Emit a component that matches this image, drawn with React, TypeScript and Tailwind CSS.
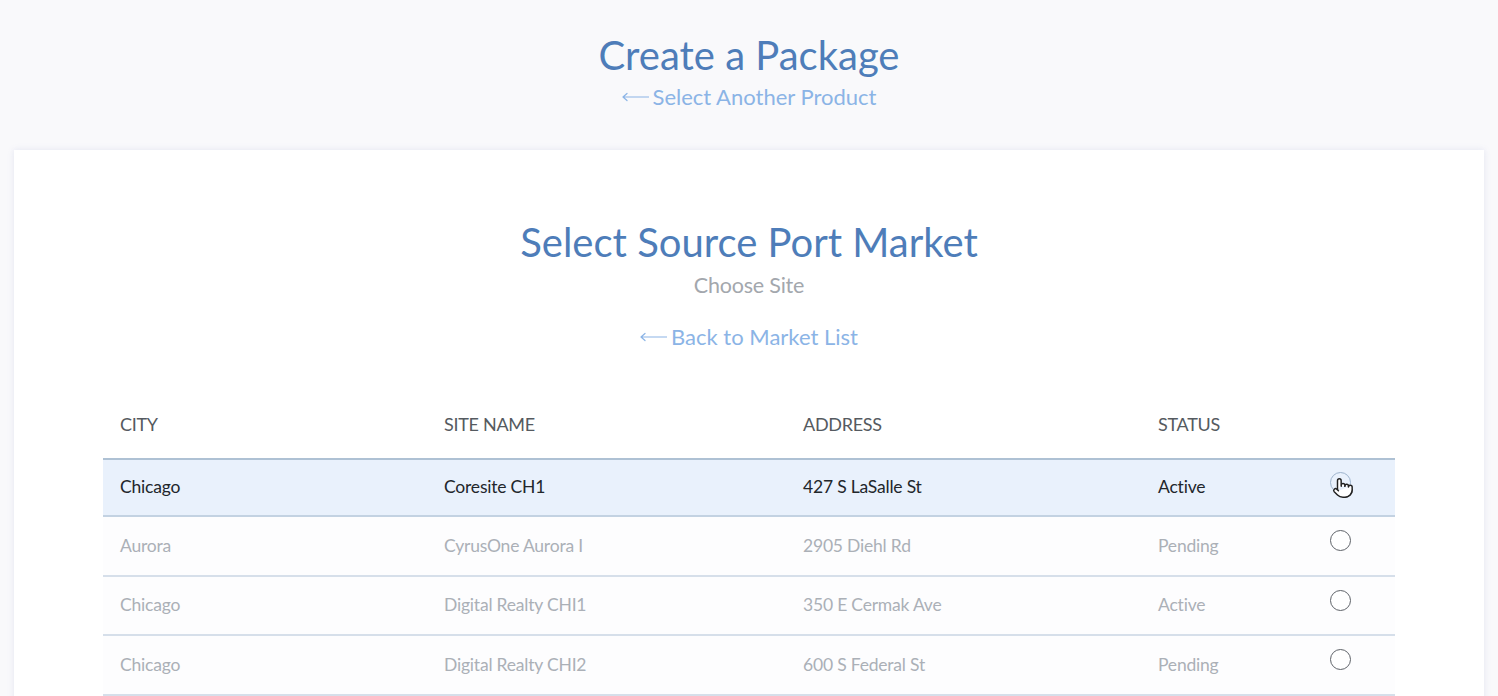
import { Pointer } from 'lucide-react'

interface Site {
  city: string
  name: string
  address: string
  status: string
}

const sites: Site[] = [
  { city: 'Chicago', name: 'Coresite CH1', address: '427 S LaSalle St', status: 'Active' },
  { city: 'Aurora', name: 'CyrusOne Aurora I', address: '2905 Diehl Rd', status: 'Pending' },
  { city: 'Chicago', name: 'Digital Realty CHI1', address: '350 E Cermak Ave', status: 'Active' },
  { city: 'Chicago', name: 'Digital Realty CHI2', address: '600 S Federal St', status: 'Pending' },
]

const cols = 'grid grid-cols-[324px_359px_355px_179px_1fr]'

function BackArrow() {
  return (
    <svg width="27" height="10" viewBox="0 0 27 10" fill="none" className="shrink-0">
      <path d="M1 5h26M5 1.5 1 5l4 3.5" stroke="currentColor" strokeWidth="1.2" strokeLinecap="round" strokeLinejoin="round" />
    </svg>
  )
}

function BackLink({ label }: { label: string }) {
  return (
    <a className="flex items-center justify-center gap-[4px] text-[22px] leading-[26px] text-[#8bb4e6] cursor-pointer">
      <BackArrow />
      <span>{label}</span>
    </a>
  )
}

export default function App() {
  const selected = 0

  return (
    <div className="min-h-screen bg-[#f9f9fb] px-[14px] pb-10 font-['Lato','Open_Sans',sans-serif]">
      {/* Page header */}
      <div className="flex flex-col items-center pt-[31px]">
        <h1 className="text-[40px] leading-[48px] text-[#4e7db9]">Create a Package</h1>
        <div className="mt-[5px]">
          <BackLink label="Select Another Product" />
        </div>
      </div>

      {/* Card */}
      <div className="mt-[40px] bg-white shadow-[0_0_6px_rgba(200,205,230,0.45)] px-[89px] pb-10">
        <div className="flex flex-col items-center pt-[68px]">
          <h2 className="text-[40px] leading-[48px] text-[#4e7db9]">Select Source Port Market</h2>
          <p className="mt-[6px] text-[21.5px] leading-[26px] tracking-[-0.2px] text-[#a3a7ad]">Choose Site</p>
          <div className="mt-[26px]">
            <BackLink label="Back to Market List" />
          </div>
        </div>

        {/* Table */}
        <div className="mt-[48px]">
          <div className={`${cols} h-[60px] items-center pb-[8px] text-[18px] tracking-[-0.3px] text-[#555a60]`}>
            <div className="pl-[17px]">CITY</div>
            <div className="pl-[17px]">SITE NAME</div>
            <div className="pl-[17px]">ADDRESS</div>
            <div className="pl-[17px]">STATUS</div>
            <div />
          </div>
          {sites.map((site, i) => {
            const isSel = i === selected
            return (
              <div
                key={site.name}
                className={`${cols} relative items-center text-[17.5px] tracking-[-0.2px] border-b-2 ${
                  isSel
                    ? 'h-[59px] bg-[#e9f1fc] text-[#22262b] border-t-2 border-t-[#aec1d4] border-b-[#c3d2e2]'
                    : 'h-[59.5px] bg-[#fdfdfe] text-[#abb0b7] border-b-[#d6dfea]'
                }`}
              >
                <div className="pl-[17px]">{site.city}</div>
                <div className="pl-[17px]">{site.name}</div>
                <div className="pl-[17px]">{site.address}</div>
                <div className="pl-[17px]">{site.status}</div>
                <div className="pl-[10px] pb-[10px]">
                  <span
                    className={`block h-[21px] w-[21px] rounded-full border-[1.5px] ${
                      isSel ? 'border-[#9db3cc]' : 'border-[#5e6268] bg-white'
                    }`}
                  />
                </div>
                {isSel && (
                  <Pointer
                    className="absolute left-[1229px] top-[17px] h-[22px] w-[22px] fill-white text-[#222]"
                    strokeWidth={1.6}
                  />
                )}
              </div>
            )
          })}
        </div>
      </div>
    </div>
  )
}
